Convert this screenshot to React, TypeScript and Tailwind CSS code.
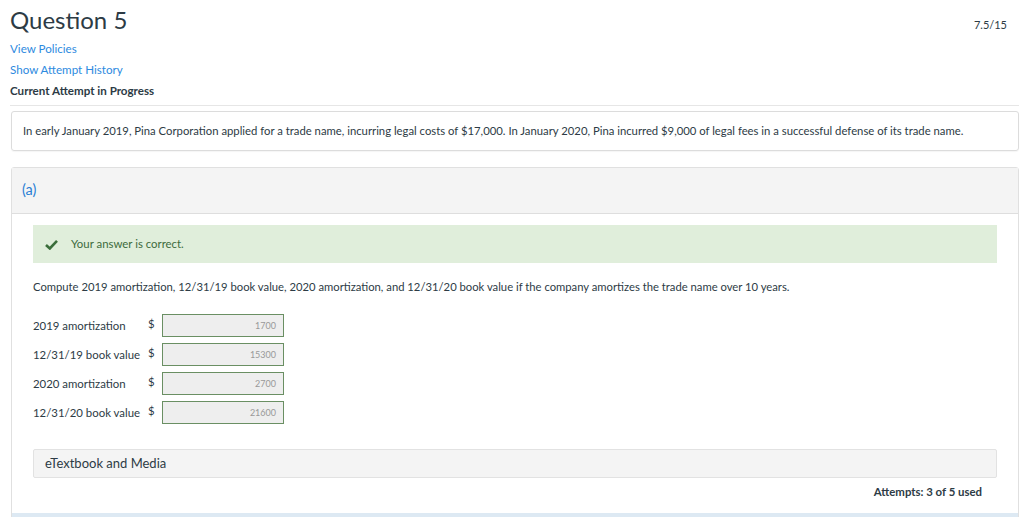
import React from "react";

const rows = [
  { label: "2019 amortization", value: "1700" },
  { label: "12/31/19 book value", value: "15300" },
  { label: "2020 amortization", value: "2700" },
  { label: "12/31/20 book value", value: "21600" },
];

export default function App() {
  return (
    <div className="min-h-screen bg-white text-[#2d3b45] font-['Lato','Liberation_Sans',sans-serif] pl-[10px] pr-[5px] overflow-hidden">
      {/* Header */}
      <div className="flex items-start justify-between pt-[5px]">
        <h1 className="text-[24px] leading-[30px] font-normal">Question 5</h1>
        <span className="text-[11px] mt-[12px] mr-[12px]">7.5/15</span>
      </div>
      <div className="mt-[7px] flex flex-col gap-[7px] text-[11.6px] leading-[14px]">
        <a className="text-[#2d8ae0] cursor-pointer">View Policies</a>
        <a className="text-[#2d8ae0] cursor-pointer">Show Attempt History</a>
        <span className="font-bold">Current Attempt in Progress</span>
      </div>
      <div className="mt-[7px] border-t border-[#e6e6e6]" />

      {/* Question */}
      <div className="mt-[5px] ml-px border border-[#dcdcdc] rounded-[3px] px-[11px] py-[12px] text-[11.3px] leading-[14px] shadow-[0_1px_1px_rgba(0,0,0,0.04)]">
        In early January 2019, Pina Corporation applied for a trade name, incurring legal costs of $17,000. In January 2020, Pina incurred $9,000 of legal fees in a successful defense of its trade name.
      </div>

      {/* Part (a) */}
      <div className="mt-[16px] ml-px border border-[#e0e0e0] rounded-t-[3px]">
        <div className="h-[46px] bg-[#f4f4f4] border-b border-[#dedede] flex items-center px-[10px]">
          <span className="text-[14.5px] text-[#2a7fd4] -mt-px">(a)</span>
        </div>
        <div className="px-[21px] pt-[11px]">
          <div className="h-[38px] bg-[#e0eedb] flex items-center px-[12px]">
            <svg width="13" height="11" viewBox="0 0 13 11" className="mr-[13px]">
              <path d="M1 6 L4.8 9.5 L12 1.8" fill="none" stroke="#3b6e3b" strokeWidth="2.6" />
            </svg>
            <span className="text-[11.4px] text-[#3d6b3d]">Your answer is correct.</span>
          </div>
          <p className="mt-[17px] text-[11.25px] leading-[14px]">
            Compute 2019 amortization, 12/31/19 book value, 2020 amortization, and 12/31/20 book value if the company amortizes the trade name over 10 years.
          </p>
          <div className="mt-[20px] flex flex-col gap-[6px]">
            {rows.map((r) => (
              <div key={r.label} className="flex items-center h-[23px]">
                <span className="w-[115px] text-[11.4px]">{r.label}</span>
                <span className="w-[14px] text-[11.4px] -mt-[4px]">$</span>
                <div className="w-[122px] h-[23px] bg-[#eeeeee] border border-[#6a8f63] flex items-center justify-end pr-[7px] text-[9px] text-[#999999]">
                  {r.value}
                </div>
              </div>
            ))}
          </div>
          <div className="mt-[25px] h-[29px] bg-[#f4f4f4] border border-[#e2e2e2] rounded-[2px] flex items-center px-[11px] text-[13px]">
            eTextbook and Media
          </div>
          <div className="flex justify-end mt-[5px] pr-[15px] text-[11.4px] font-bold">
            Attempts: 3 of 5 used
          </div>
          <div className="h-[13px]" />
        </div>
        <div className="h-[10px] bg-[#dde9f3]" />
      </div>
    </div>
  );
}
